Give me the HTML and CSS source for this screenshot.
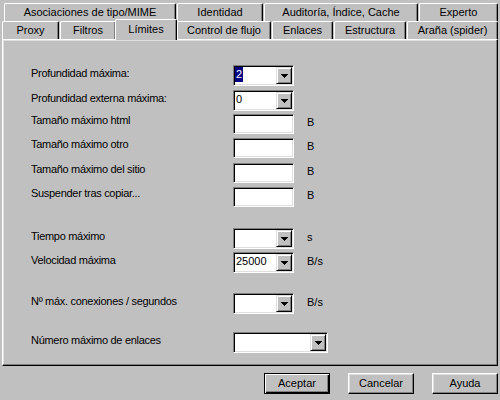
FILE: index.html
```html
<!DOCTYPE html>
<html lang="es">
<head>
<meta charset="utf-8">
<title>Límites</title>
<link rel="stylesheet" href="styles.css">
</head>
<body>
<div class="dialog">
  <div class="tabs">
    <div class="tabrow back">
      <div class="tab w-mime">Asociaciones de tipo/MIME</div>
      <div class="tab w-ident">Identidad</div>
      <div class="tab w-audit">Auditoría, Índice, Cache</div>
      <div class="tab w-exp">Experto</div>
    </div>
    <div class="tabrow front">
      <div class="tab w-proxy">Proxy</div>
      <div class="tab w-filt">Filtros</div>
      <div class="tab selected">Límites</div>
      <div class="tab w-flow">Control de flujo</div>
      <div class="tab w-links">Enlaces</div>
      <div class="tab w-struct">Estructura</div>
      <div class="tab w-spider">Araña (spider)</div>
    </div>
  </div>

  <div class="panel">
    <div class="form">
      <div class="row crow">
        <span class="label">Profundidad máxima:</span>
        <div class="combo"><span class="val"><span class="sel">2</span></span><span class="drop"><svg width="7" height="4" viewBox="0 0 7 4"><path d="M0 0h7v1h-1v1h-1v1h-1v1h-1v-1h-1v-1h-1v-1h-1z"/></svg></span></div>
      </div>
      <div class="row crow mt4">
        <span class="label">Profundidad externa máxima:</span>
        <div class="combo"><span class="val">0</span><span class="drop"><svg width="7" height="4" viewBox="0 0 7 4"><path d="M0 0h7v1h-1v1h-1v1h-1v1h-1v-1h-1v-1h-1v-1h-1z"/></svg></span></div>
      </div>
      <div class="row frow mt3">
        <span class="label">Tamaño máximo html</span>
        <div class="field"></div>
        <span class="unit">B</span>
      </div>
      <div class="row frow mt4">
        <span class="label">Tamaño máximo otro</span>
        <div class="field"></div>
        <span class="unit">B</span>
      </div>
      <div class="row frow mt5">
        <span class="label">Tamaño máximo del sitio</span>
        <div class="field"></div>
        <span class="unit">B</span>
      </div>
      <div class="row frow mt4">
        <span class="label">Suspender tras copiar...</span>
        <div class="field"></div>
        <span class="unit">B</span>
      </div>
      <div class="row crow mt21">
        <span class="label">Tiempo máximo</span>
        <div class="combo"><span class="val"></span><span class="drop"><svg width="7" height="4" viewBox="0 0 7 4"><path d="M0 0h7v1h-1v1h-1v1h-1v1h-1v-1h-1v-1h-1v-1h-1z"/></svg></span></div>
        <span class="unit">s</span>
      </div>
      <div class="row crow mt3">
        <span class="label">Velocidad máxima</span>
        <div class="combo"><span class="val">25000</span><span class="drop"><svg width="7" height="4" viewBox="0 0 7 4"><path d="M0 0h7v1h-1v1h-1v1h-1v1h-1v-1h-1v-1h-1v-1h-1z"/></svg></span></div>
        <span class="unit">B/s</span>
      </div>
      <div class="row crow mt20">
        <span class="label">Nº máx. conexiones / segundos</span>
        <div class="combo"><span class="val"></span><span class="drop"><svg width="7" height="4" viewBox="0 0 7 4"><path d="M0 0h7v1h-1v1h-1v1h-1v1h-1v-1h-1v-1h-1v-1h-1z"/></svg></span></div>
        <span class="unit">B/s</span>
      </div>
      <div class="row crow mt18">
        <span class="label">Número máximo de enlaces</span>
        <div class="combo wide"><span class="val"></span><span class="drop"><svg width="7" height="4" viewBox="0 0 7 4"><path d="M0 0h7v1h-1v1h-1v1h-1v1h-1v-1h-1v-1h-1v-1h-1z"/></svg></span></div>
      </div>
    </div>
  </div>

  <div class="buttons">
    <div class="btn default">Aceptar</div>
    <div class="btn">Cancelar</div>
    <div class="btn">Ayuda</div>
  </div>
</div>
</body>
</html>
```

FILE: styles.css
```css
html, body {
  margin: 0;
  padding: 0;
  background: #c0c0c0;
}

body {
  width: 500px;
  height: 400px;
  overflow: hidden;
  font-family: "Liberation Sans", Arial, sans-serif;
  font-size: 11px;
  color: #000;
}

.dialog {
  padding: 3px 2px 0 2px;
}

/* ---------- tabs ---------- */
.tabs {
  display: flex;
  flex-direction: column;
}

.tabrow {
  display: flex;
  align-items: flex-end;
  height: 18px;
}

.tabrow.back {
  margin-left: 2px;
}

.tab {
  box-sizing: border-box;
  height: 18px;
  margin-left: 1px;
  padding-top: 2px;
  line-height: 13px;
  text-align: center;
  white-space: nowrap;
  background: #c0c0c0;
  border-top: 1px solid #fff;
  border-left: 1px solid #fff;
  border-right: 1px solid #000;
  border-radius: 2px 2px 0 0;
  box-shadow: inset -1px 0 0 #808080;
}

.tab:first-child {
  margin-left: 0;
}

.w-mime { width: 172px; }
.w-ident { width: 86px; }
.w-audit { width: 154px; }
.w-exp { width: 79px; }

.w-proxy { width: 57px; }
.w-filt { width: 56px; }
.w-flow { width: 94px; }
.w-links { width: 61px; }
.w-struct { width: 72px; }
.w-spider { width: 91px; }

.tab.selected {
  position: relative;
  z-index: 1;
  width: 62px;
  height: 21px;
  margin: -2px -1px -1px -1px;
  padding-top: 3px;
}

/* ---------- panel ---------- */
.panel {
  box-sizing: border-box;
  height: 327px;
  border: 1px solid;
  border-color: #fff #000 #000 #fff;
  box-shadow: inset -1px -1px 0 #808080, inset 1px 1px 0 #dfdfdf;
}

.form {
  display: flex;
  flex-direction: column;
  padding: 25px 0 0 28px;
}

.row {
  display: flex;
  align-items: flex-start;
}

.crow { height: 21px; }
.frow { height: 20px; }

.mt3 { margin-top: 3px; }
.mt4 { margin-top: 4px; }
.mt5 { margin-top: 5px; }
.mt18 { margin-top: 18px; }
.mt20 { margin-top: 20px; }
.mt21 { margin-top: 21px; }

.label {
  width: 202px;
  line-height: 13px;
  letter-spacing: -0.3px;
  white-space: nowrap;
}

.crow .label { padding-top: 2px; }
.frow .label { padding-top: 0; }

.unit {
  margin-left: 13px;
  line-height: 13px;
}

.crow .unit { padding-top: 3px; }
.frow .unit { padding-top: 2px; }

/* sunken controls */
.combo,
.field {
  box-sizing: border-box;
  width: 61px;
  background: #fff;
  border: 1px solid;
  border-color: #808080 #fff #fff #808080;
  box-shadow: inset 1px 1px 0 #000, inset -1px -1px 0 #dfdfdf;
}

.field {
  height: 20px;
}

.combo {
  display: flex;
  height: 21px;
  padding: 1px;
}

.combo.wide {
  width: 95px;
}

.val {
  flex: 1;
  line-height: 15px;
  padding-left: 1px;
  white-space: nowrap;
}

.sel {
  display: inline-block;
  margin-left: -1px;
  padding: 0 1px;
  background: #000080;
  color: #fff;
}

.drop {
  box-sizing: border-box;
  width: 16px;
  height: 17px;
  display: flex;
  align-items: center;
  justify-content: center;
  background: #c0c0c0;
  border: 1px solid;
  border-color: #dfdfdf #000 #000 #dfdfdf;
  box-shadow: inset 1px 1px 0 #fff, inset -1px -1px 0 #808080;
}

.drop svg {
  display: block;
  fill: #000;
}

/* ---------- buttons ---------- */
.buttons {
  display: flex;
  justify-content: flex-end;
  gap: 18px;
  margin-top: 7px;
}

.btn {
  box-sizing: border-box;
  width: 66px;
  height: 21px;
  line-height: 19px;
  text-align: center;
  background: #c0c0c0;
  border: 1px solid;
  border-color: #fff #000 #000 #fff;
  box-shadow: inset -1px -1px 0 #808080, inset 1px 1px 0 #dfdfdf;
}

.btn.default {
  border-color: #000;
  box-shadow: inset 1px 1px 0 #fff, inset -1px -1px 0 #000, inset -2px -2px 0 #808080;
}
```
